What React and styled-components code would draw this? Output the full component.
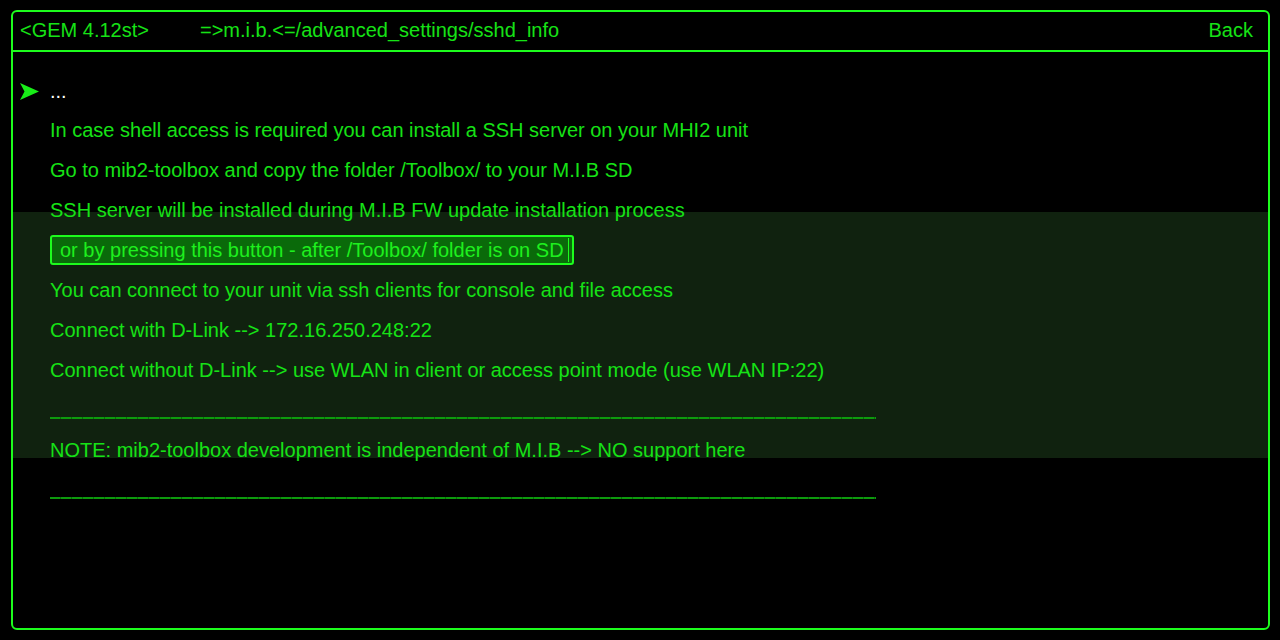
import React from "react";
import styled, { createGlobalStyle } from "styled-components";

const Global = createGlobalStyle`
  html, body { margin: 0; padding: 0; background: #000; }
  body { font-family: "Liberation Sans", Arial, sans-serif; }
  #root { width: 1280px; height: 640px; overflow: hidden; background: #000; }
`;

const Frame = styled.div`
  position: relative;
  box-sizing: border-box;
  margin: 10px 10px 0 11px;
  width: 1259px;
  height: 620px;
  border: 2px solid #1dfc1d;
  border-radius: 6px;
  display: flex;
  flex-direction: column;
`;

const Header = styled.header`
  box-sizing: border-box;
  height: 40px;
  border-bottom: 2px solid #1dfc1d;
  display: flex;
  align-items: center;
  padding: 0 15px 1px 7px;
  font-size: 20px;
  color: #16e216;
`;

const Version = styled.span`
  width: 180px;
`;

const Path = styled.span`
  flex: 1;
`;

const Back = styled.span``;

const Band = styled.div`
  position: absolute;
  left: 0;
  right: 0;
  top: 200px;
  height: 246px;
  background: #10220f;
  z-index: 0;
`;

const Content = styled.main`
  position: relative;
  z-index: 1;
  padding: 18px 0 0 7px;
  display: flex;
  flex-direction: column;
`;

const Row = styled.div`
  height: 40px;
  display: grid;
  grid-template-columns: 30px 1fr;
  align-items: center;
  font-size: 20px;
  color: ${(p) => (p.$white ? "#ffffff" : "#16e216")};
  white-space: nowrap;
`;

const Marker = styled.span`
  display: flex;
  align-items: center;
  padding-top: 2px;
`;

const Dots = styled.span`
  padding-top: 2px;
`;

const Button = styled.span`
  justify-self: start;
  box-sizing: border-box;
  height: 30px;
  display: inline-flex;
  align-items: stretch;
  padding: 1px 3px 1px 8px;
  border: 2px solid #1dfc1d;
  border-radius: 3px;
  background: #0a6a0a;
  color: #1ef01e;
`;

const ButtonLabel = styled.span`
  display: flex;
  align-items: center;
  padding-right: 4px;
  border-right: 1px solid #1dfc1d;
`;

const Rule = styled.span`
  display: block;
  width: 826px;
  height: 2px;
  margin-top: 16px;
  background: repeating-linear-gradient(
    to right,
    #0d9a0d 0,
    #0d9a0d 10px,
    #0a6a0a 10px,
    #0a6a0a 11px
  );
`;

const Arrow = () => (
  <svg width="20" height="17" viewBox="0 0 20 17">
    <path d="M0 0 L19 8.5 L0 17 L4.5 8.5 Z" fill="#18ee18" />
  </svg>
);

const lines = [
  "In case shell access is required you can install a SSH server on your MHI2 unit",
  "Go to mib2-toolbox and copy the folder /Toolbox/ to your M.I.B SD",
  "SSH server will be installed during M.I.B FW update installation process",
];

const lines2 = [
  "You can connect to your unit via ssh clients for console and file access",
  "Connect with D-Link --> 172.16.250.248:22",
  "Connect without D-Link --> use WLAN in client or access point mode (use WLAN IP:22)",
];

export default function App() {
  return (
    <>
      <Global />
      <Frame>
        <Header>
          <Version>&lt;GEM 4.12st&gt;</Version>
          <Path>=&gt;m.i.b.&lt;=/advanced_settings/sshd_info</Path>
          <Back>Back</Back>
        </Header>
        <Band />
        <Content>
          <Row $white>
            <Marker>
              <Arrow />
            </Marker>
            <Dots>...</Dots>
          </Row>
          {lines.map((t) => (
            <Row key={t}>
              <span />
              <span>{t}</span>
            </Row>
          ))}
          <Row>
            <span />
            <Button>
              <ButtonLabel>or by pressing this button - after /Toolbox/ folder is on SD</ButtonLabel>
            </Button>
          </Row>
          {lines2.map((t) => (
            <Row key={t}>
              <span />
              <span>{t}</span>
            </Row>
          ))}
          <Row>
            <span />
            <Rule />
          </Row>
          <Row>
            <span />
            <span>NOTE: mib2-toolbox development is independent of M.I.B --&gt; NO support here</span>
          </Row>
          <Row>
            <span />
            <Rule />
          </Row>
        </Content>
      </Frame>
    </>
  );
}
